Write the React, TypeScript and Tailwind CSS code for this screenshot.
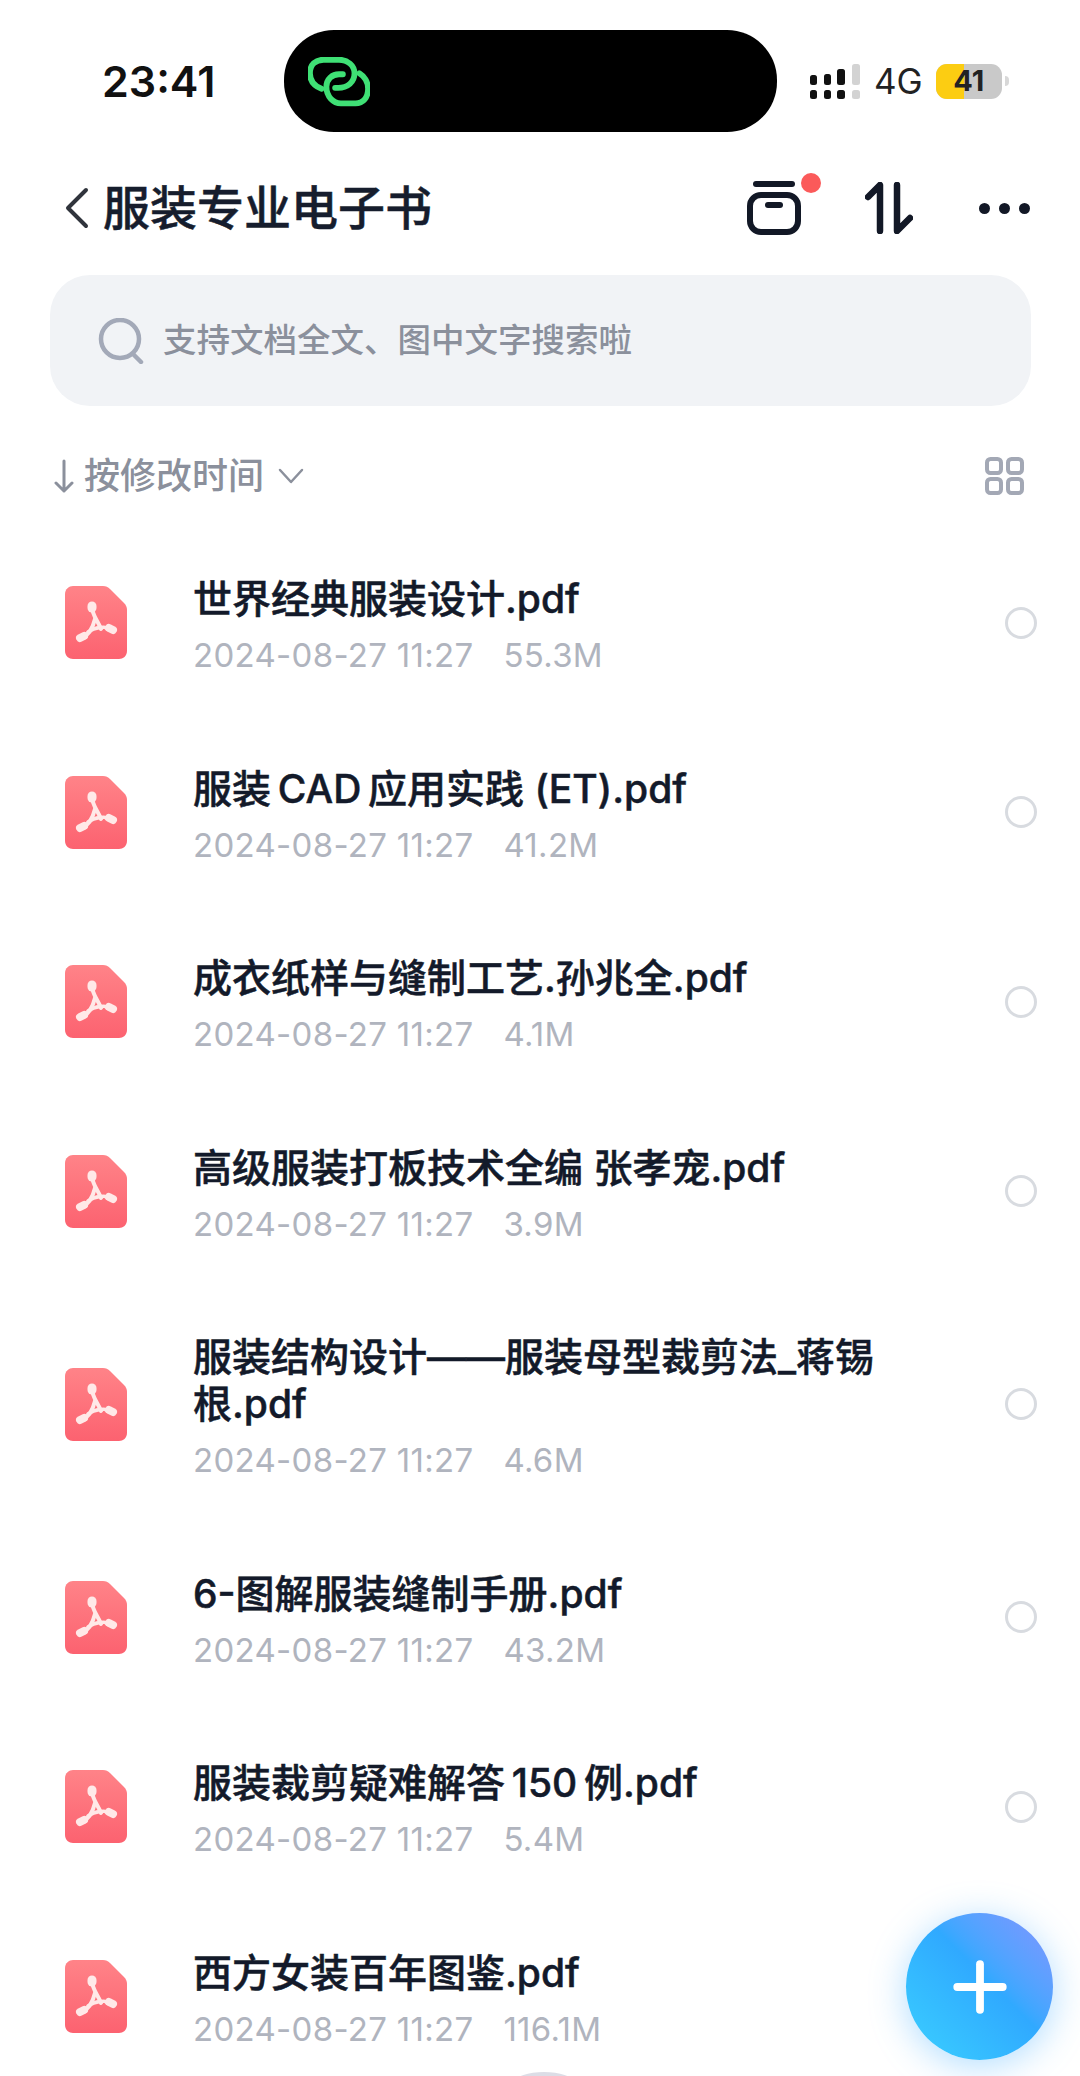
import { Plus } from "lucide-react";

const files = [
  { name: "世界经典服装设计.pdf", size: "55.3M" },
  { name: "服装\u2009CAD\u2009应用实践 (ET).pdf", size: "41.2M" },
  { name: "成衣纸样与缝制工艺.孙兆全.pdf", size: "4.1M" },
  { name: "高级服装打板技术全编 张孝宠.pdf", size: "3.9M" },
  { name: "服装结构设计——服装母型裁剪法_蒋锡根.pdf", size: "4.6M" },
  { name: "6-图解服装缝制手册.pdf", size: "43.2M" },
  { name: "服装裁剪疑难解答\u2009150\u2009例.pdf", size: "5.4M" },
  { name: "西方女装百年图鉴.pdf", size: "116.1M" },
];

function PdfIcon() {
  return (
    <svg width="62" height="73" viewBox="0 0 62 73" className="shrink-0">
      <defs>
        <linearGradient id="pdfFill" x1="0" y1="0" x2="0" y2="1">
          <stop offset="0" stopColor="#ff8388" />
          <stop offset="1" stopColor="#fc6270" />
        </linearGradient>
      </defs>
      <path
        d="M8 0H38C41 0 43 1 45 3L59 17C61 19 62 21 62 24V65C62 70 58 73 54 73H8C4 73 0 70 0 65V8C0 3 4 0 8 0Z"
        fill="url(#pdfFill)"
      />
      <g fill="none" stroke="#ffe9e8" strokeLinecap="round">
        <path d="M27 21C27 29 33 35 36 43" strokeWidth="4" />
        <path d="M17 52C24 49 28 41 30 33" strokeWidth="4" />
        <path d="M47 43C40 40 30 41 23 46" strokeWidth="3.5" />
        <path d="M27 20V22" strokeWidth="9" />
        <path d="M15 52L19 50" strokeWidth="8" />
        <path d="M44 42L48 44" strokeWidth="8" />
      </g>
    </svg>
  );
}

function FileRow({ name, size }: { name: string; size: string }) {
  return (
    <div className="flex items-center py-[38.25px] pl-[65px] pr-[43px]">
      <PdfIcon />
      <div className="ml-[66px] w-[690px] pt-[9px]">
        <div className="text-[39px] leading-[47px] font-medium text-[#131a2a] [-webkit-text-stroke:0.5px_#131a2a]">{name}</div>
        <div className="mt-[10px] flex text-[33px] leading-[47px] tracking-[0.3px] text-[#b0b4be]">
          <span>2024-08-27 11:27</span>
          <span className="ml-[30px]">{size}</span>
        </div>
      </div>
      <div className="ml-auto h-[32px] w-[32px] rounded-full border-[3px] border-[#d8dbe0]" />
    </div>
  );
}

export default function App() {
  return (
    <div className="relative h-[2076px] w-[1080px] overflow-hidden bg-white font-['Inter','Noto_Sans_CJK_SC',sans-serif]">
      {/* 状态栏 */}
      <div className="flex items-center pt-[30px]">
        <div className="w-[284px] pl-[102px] text-[43px] font-semibold text-[#111]">23:41</div>
        <div className="flex h-[102px] w-[493px] items-center rounded-[50px] bg-black pl-[24px]">
          <svg width="62" height="50" viewBox="-1 -1 64 50" fill="none" stroke="#3fe075" strokeWidth="6" strokeLinecap="round" className="mt-[2px]">
            <path d="M13 31C5 28 1 22 1 15C1 6 7 1 15 1H31C40 1 47 7 47 15C47 24 40 30 30 30H27" />
            <path d="M35 16H31C24 16 18 21 18 29C18 39 25 46 33 46H48C56 46 61 40 61 31C61 24 57 18 52 15" />
          </svg>
        </div>
        <div className="ml-[33px] flex items-center">
          <svg width="50" height="36" viewBox="0 0 50 36" className="mt-[1px]">
            <g fill="#111">
              <rect x="0" y="11" width="7" height="10" rx="2.5" />
              <rect x="14" y="10" width="7" height="11" rx="2.5" />
              <rect x="27" y="5" width="8" height="16" rx="2.5" />
              <rect x="0" y="26" width="7" height="9" rx="2.5" />
              <rect x="14" y="26" width="7" height="9" rx="2.5" />
              <rect x="27" y="26" width="8" height="9" rx="2.5" />
            </g>
            <g fill="#d3d3d3">
              <rect x="42" y="0" width="8" height="21" rx="2.5" />
              <rect x="42" y="26" width="8" height="9" rx="2.5" />
            </g>
          </svg>
          <span className="ml-[14px] text-[35px] text-[#222]">4G</span>
          <div className="relative ml-[13px] flex h-[35px] w-[66px] items-center justify-center overflow-hidden rounded-[11px] bg-[#c9c9c9]">
            <div className="absolute inset-y-0 left-0 w-[28px] bg-[#fccd12]" />
            <span className="relative text-[29px] font-bold text-[#222]">41</span>
          </div>
          <div className="ml-[3px] h-[10px] w-[4px] rounded-r-full bg-[#d8d8d8]" />
        </div>
      </div>

      {/* 标题栏 */}
      <div className="mt-[38px] flex h-[76px] items-center pl-[65px]">
        <svg width="24" height="42" viewBox="0 0 24 42" fill="none" stroke="#30343c" strokeWidth="4" strokeLinecap="round" strokeLinejoin="round">
          <path d="M21 3L3 21L21 39" />
        </svg>
        <span className="ml-[14px] text-[47px] font-medium text-[#161d2d] [-webkit-text-stroke:0.5px_#161d2d]">服装专业电子书</span>
        <div className="relative ml-[315px] h-[54px] w-[54px]">
          <svg width="54" height="54" viewBox="0 0 54 54" fill="none" stroke="#121826" strokeLinecap="round">
            <path d="M9 3H45" strokeWidth="6" />
            <rect x="3" y="14" width="48" height="37" rx="11" strokeWidth="6" />
            <path d="M21 24H33" strokeWidth="6" />
          </svg>
          <div className="absolute -right-[20px] -top-[8px] h-[20px] w-[20px] rounded-full bg-[#fb5a5a]" />
        </div>
        <svg width="48" height="52" viewBox="0 0 48 52" fill="none" stroke="#121826" strokeWidth="6.5" strokeLinecap="round" strokeLinejoin="round" className="ml-[64px]">
          <path d="M3 15L15 3V49" />
          <path d="M32 3V49L45 36" />
        </svg>
        <div className="ml-[66px] flex gap-[9px]">
          <div className="h-[11px] w-[11px] rounded-full bg-[#121826]" />
          <div className="h-[11px] w-[11px] rounded-full bg-[#121826]" />
          <div className="h-[11px] w-[11px] rounded-full bg-[#121826]" />
        </div>
      </div>

      {/* 搜索框 */}
      <div className="ml-[50px] mt-[29px] flex h-[131px] w-[981px] items-center rounded-[40px] bg-[#f1f3f6] pl-[48px]">
        <svg width="46" height="46" viewBox="0 0 46 46" fill="none" stroke="#a3a9b8" strokeWidth="4.5" strokeLinecap="round">
          <circle cx="22" cy="21" r="19" />
          <path d="M35 36L43 44" />
        </svg>
        <span className="ml-[19px] text-[33.5px] font-medium text-[#8b909c]">支持文档全文、图中文字搜索啦</span>
      </div>

      {/* 排序 */}
      <div className="mt-[40px] flex h-[60px] items-center pl-[54px] pr-[56px] text-[#8b909c]">
        <svg width="20" height="34" viewBox="0 0 20 34" fill="none" stroke="#8b909c" strokeWidth="3" strokeLinecap="round" strokeLinejoin="round">
          <path d="M10 2V32M2 24L10 32L18 24" />
        </svg>
        <span className="ml-[10px] text-[36px] font-medium">按修改时间</span>
        <svg width="26" height="16" viewBox="0 0 26 16" fill="none" stroke="#8b909c" strokeWidth="2.5" strokeLinecap="round" strokeLinejoin="round" className="ml-[14px]">
          <path d="M2 2L13 14L24 2" />
        </svg>
        <svg width="39" height="38" viewBox="0 0 39 38" fill="none" stroke="#a3a8b5" strokeWidth="4" className="ml-auto">
          <rect x="2" y="2" width="14" height="14" rx="3.5" />
          <rect x="23" y="2" width="14" height="14" rx="3.5" />
          <rect x="2" y="22" width="14" height="14" rx="3.5" />
          <rect x="23" y="22" width="14" height="14" rx="3.5" />
        </svg>
      </div>

      {/* 文件列表 */}
      <div className="mt-[22px]">
        {files.map((f) => (
          <FileRow key={f.name} name={f.name} size={f.size} />
        ))}
      </div>

      {/* 新建按钮 */}
      <div className="absolute left-[906px] top-[1913px] flex h-[147px] w-[147px] items-center justify-center rounded-full bg-gradient-to-tr from-[#3cd0ff] via-[#30a9ff] via-55% to-[#7f94ff] shadow-[0_6px_36px_rgba(60,170,255,0.4)]">
        <Plus size={78} color="#fff" strokeWidth={2.4} />
      </div>

      <div className="absolute left-[515px] top-[2072px] h-[20px] w-[58px] rounded-[50%] bg-[#dcdde6]" />
    </div>
  );
}
